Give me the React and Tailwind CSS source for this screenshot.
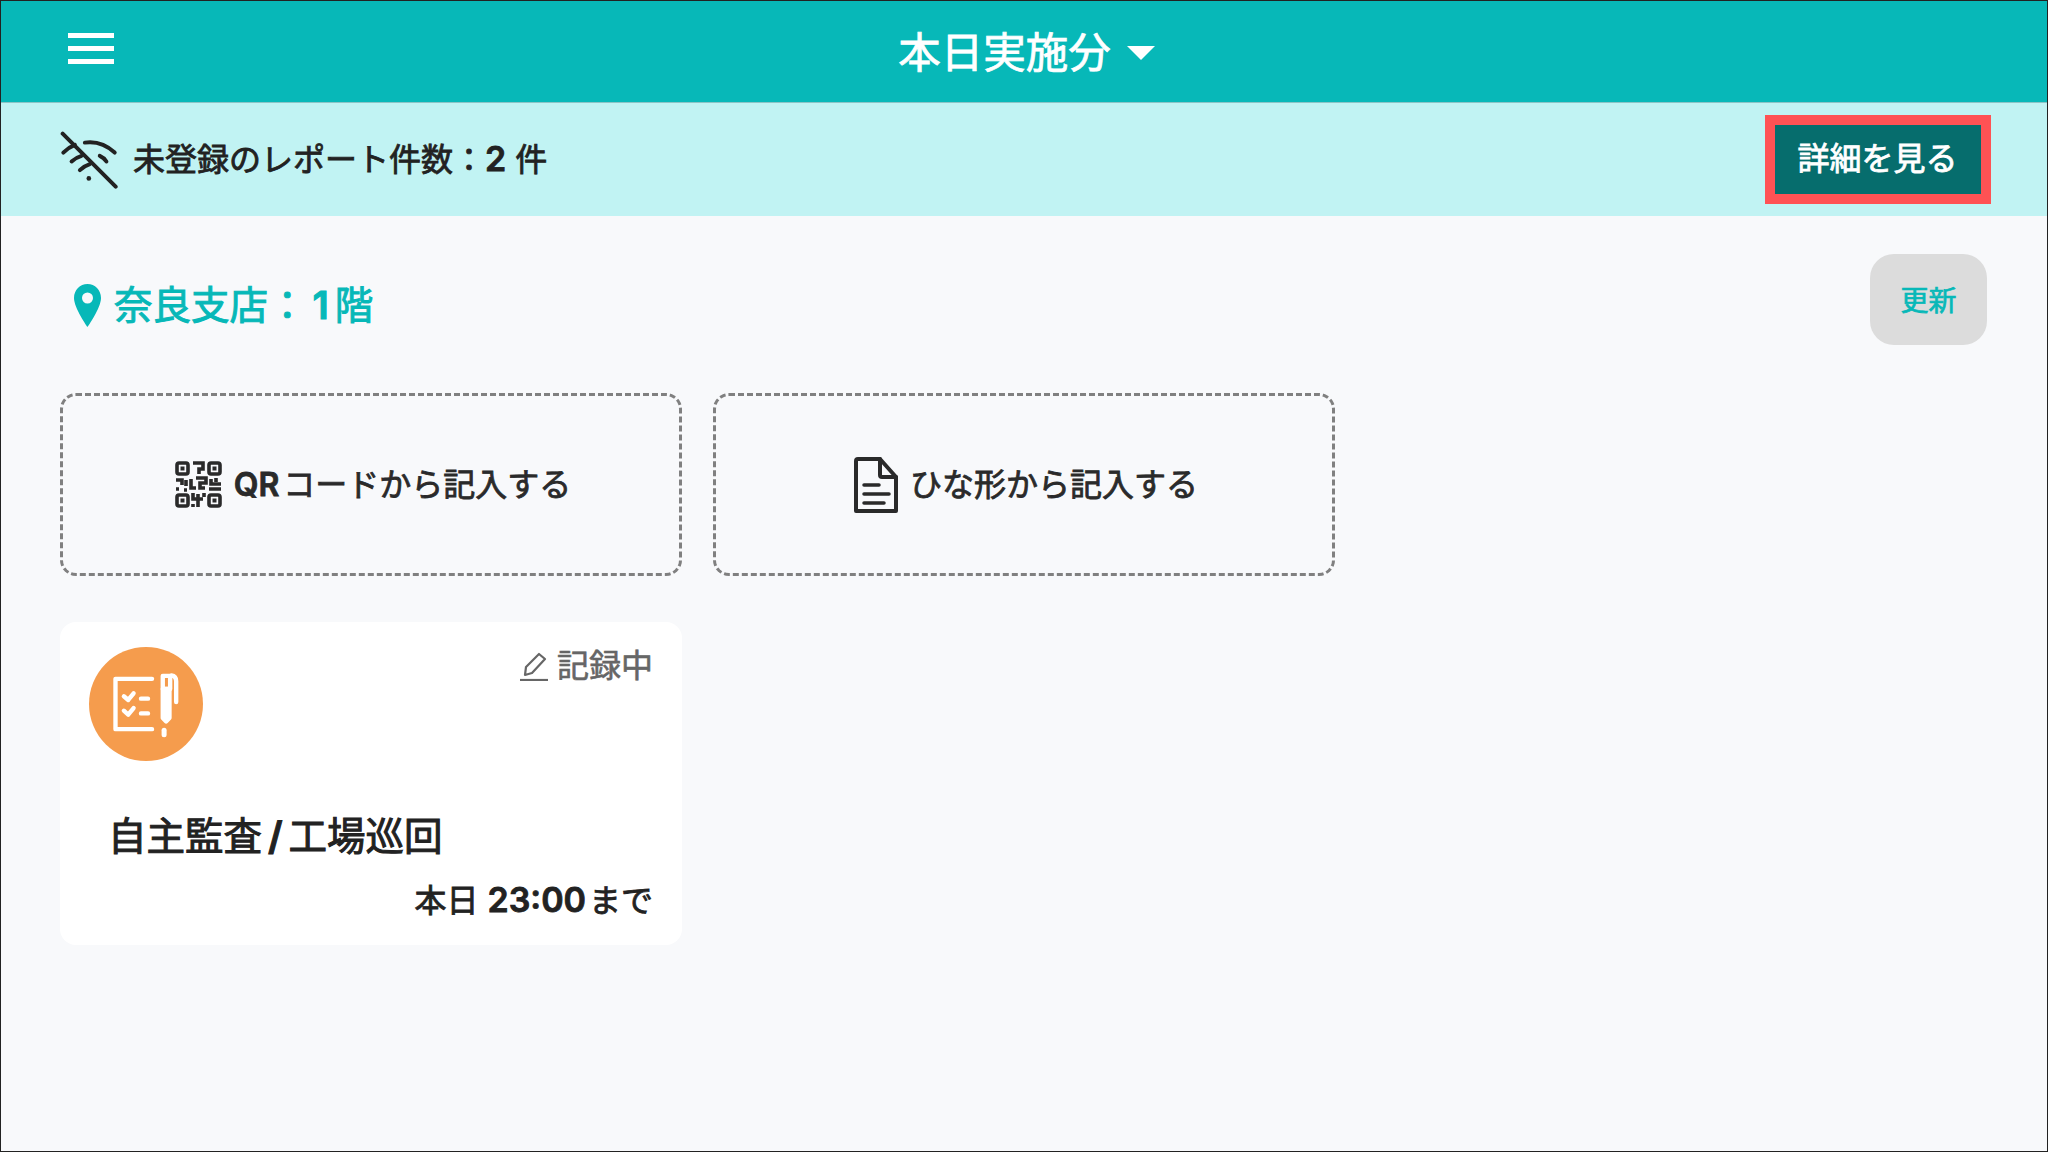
import React from "react";

const font = { fontFamily: 'Inter, "Noto Sans CJK JP", sans-serif' };

const WifiOffIcon = () => (
  <svg viewBox="30 30 175 175" className="w-[58px] h-[58px] shrink-0" fill="none" stroke="#222" strokeWidth="12" strokeLinecap="round">
    <path d="M38 38L198 198" />
    <path d="M40 95Q55 80 75 72" />
    <path d="M105 65Q155 58 195 95" />
    <path d="M65 122Q78 110 95 105" />
    <path d="M150 105Q162 110 170 122" />
    <path d="M90 148Q102 136 120 130" />
    <circle cx="117" cy="173" r="7" fill="#222" stroke="none" />
  </svg>
);

const PinIcon = () => (
  <svg viewBox="0 0 27 43" className="w-[27px] h-[43px] shrink-0">
    <path
      fill="#07b8b8"
      fillRule="evenodd"
      d="M13.5 0C6 0 0 6 0 14C0 24 13.5 43 13.5 43S27 24 27 14C27 6 21 0 13.5 0ZM13.5 8.5A5.5 5.5 0 1 1 13.5 19.5A5.5 5.5 0 1 1 13.5 8.5Z"
    />
  </svg>
);

const QrIcon = () => (
  <svg viewBox="0 0 47 47" className="w-[47px] h-[47px] shrink-0" fill="none" stroke="#2a2a2a" strokeWidth="3.6">
    <rect x="2" y="2" width="11" height="11" rx="2" />
    <rect x="34" y="2" width="11" height="11" rx="2" />
    <rect x="2" y="34" width="11" height="11" rx="2" />
    <rect x="34" y="34" width="11" height="11" rx="2" />
    <rect x="5.5" y="5.5" width="4" height="4" fill="#2a2a2a" stroke="none" />
    <rect x="37.5" y="5.5" width="4" height="4" fill="#2a2a2a" stroke="none" />
    <rect x="5.5" y="37.5" width="4" height="4" fill="#2a2a2a" stroke="none" />
    <rect x="37.5" y="37.5" width="4" height="4" fill="#2a2a2a" stroke="none" />
    <path d="M18 2H28V8H24V13" />
    <path d="M1 19H7V24M11 19V25M16 18V27H21" />
    <path d="M21 17H31V22H25V27H30" />
    <path d="M36 18V23H46M41 17V21M34 28H46" />
    <path d="M1 28H4M9 29H12" />
    <path d="M18 32V38H28M23 33V46M18 43V46M29 32V36" />
  </svg>
);

const DocIcon = () => (
  <svg viewBox="0 0 44 56" className="w-[44px] h-[56px] shrink-0" fill="none" stroke="#2a2a2a" strokeWidth="4" strokeLinejoin="round" strokeLinecap="round">
    <path d="M4 2H26L42 20V54H2V4Q2 2 4 2Z" />
    <path d="M26 2V18Q26 20 28 20H42" />
    <path d="M10 28H25M10 37H35M10 46H30" strokeWidth="3.5" />
  </svg>
);

const PenIcon = () => (
  <svg viewBox="0 0 28 29" className="w-[28px] h-[29px] shrink-0" fill="none" stroke="#666" strokeWidth="2.2" strokeLinejoin="round">
    <path d="M0 28H28" />
    <path d="M5 23L6 15L19 2L25 7L12 21Z" />
  </svg>
);

const ReportIcon = () => (
  <div className="w-[114px] h-[114px] rounded-full bg-[#f59c4d] shrink-0">
    <svg viewBox="58 50 340 340" className="w-full h-full" fill="none" stroke="#fff" strokeWidth="13" strokeLinecap="round" strokeLinejoin="round">
      <path d="M246 145H137V295H246" />
      <path d="M162 197L175 208L191 188M162 240L175 252L191 232" />
      <path d="M213 204H234M213 248H234" />
      <path d="M278 136H300V175H278Z" />
      <path d="M278 175H298V262L288 272L278 262Z" fill="#fff" />
      <path d="M304 135Q318 137 318 152V214" />
      <path d="M282 298V312" strokeWidth="15" />
    </svg>
  </div>
);

const ActionCard = ({ icon, children }) => (
  <button className="h-[183px] pl-[4px] border-[3px] border-dashed border-[#808080] rounded-2xl flex items-center justify-center gap-3 text-[32px] text-[#2a2a2a] [-webkit-text-stroke:0.8px_currentColor]">
    {icon}
    <span>{children}</span>
  </button>
);

export default function App() {
  return (
    <div style={font} className="w-[2048px] h-[1152px] border border-[#222] bg-[#f8f9fb] flex flex-col overflow-hidden">
      <header className="h-[102px] shrink-0 bg-[#07b8b8] border-b border-[#8cc4c6] grid grid-cols-[1fr_auto_1fr] items-center px-[67px]">
        <div className="flex flex-col gap-[8px] w-[46px] mb-[7px]">
          <span className="h-[5px] bg-white" />
          <span className="h-[5px] bg-white" />
          <span className="h-[5px] bg-white" />
        </div>
        <div className="flex items-center gap-4 pt-[3px] pl-[5px] text-white text-[42.5px] [-webkit-text-stroke:0.8px_currentColor]">
          <span>本日実施分</span>
          <span className="w-0 h-0 border-x-[14px] border-x-transparent border-t-[14px] border-t-white" />
        </div>
        <div />
      </header>

      <div className="h-[113px] shrink-0 bg-[#c1f3f3] flex items-center justify-between pl-[59px] pr-[56px]">
        <div className="flex items-center gap-[15px] text-[32px] text-[#222] [-webkit-text-stroke:0.8px_currentColor]">
          <WifiOffIcon />
          <span>
            未登録のレポート件数：<span className="text-[34px] leading-none font-semibold">2</span> 件
          </span>
        </div>
        <button className="w-[226px] h-[89px] pb-[1px] pr-[1px] border-[10px] border-[#ff5254] bg-[#066d6d] text-white text-[32px] [-webkit-text-stroke:0.8px_currentColor]">
          詳細を見る
        </button>
      </div>

      <main className="flex-1 pt-[38px] pl-[59px] pr-[60px]">
        <div className="flex items-start justify-between">
          <div className="flex items-center gap-[13px] pl-[14px] pt-[23px] text-[38.5px] text-[#07b8b8] [-webkit-text-stroke:1px_currentColor]">
            <PinIcon />
            <span>
              奈良支店：<span className="mx-[6px] font-semibold">1</span>階
            </span>
          </div>
          <button className="w-[117px] h-[91px] pt-[2px] rounded-[24px] bg-[#dcdcdc] text-[28px] text-[#07b8b8] [-webkit-text-stroke:0.7px_currentColor]">
            更新
          </button>
        </div>

        <div className="grid grid-cols-[622px_622px] gap-x-[31px] mt-[48px]">
          <ActionCard icon={<QrIcon />}>
            <span className="font-semibold">QR</span>
            <span className="ml-[4px]">コードから記入する</span>
          </ActionCard>
          <ActionCard icon={<DocIcon />}>ひな形から記入する</ActionCard>
        </div>

        <section className="w-[622px] h-[323px] mt-[46px] rounded-2xl bg-white flex flex-col pt-[25px] px-[29px]">
          <div className="flex items-start justify-between">
            <ReportIcon />
            <div className="flex items-center gap-[9px] -mt-[5px] text-[32px] text-[#666] [-webkit-text-stroke:0.6px_currentColor]">
              <PenIcon />
              <span>記録中</span>
            </div>
          </div>
          <h2 className="mt-[47px] pl-[19px] text-[38.5px] text-[#222] [-webkit-text-stroke:1px_currentColor]">
            自主監査<span className="mx-[6px] font-semibold">/</span>工場巡回
          </h2>
          <p className="mt-[11px] text-right text-[32px] text-[#222] [-webkit-text-stroke:0.8px_currentColor]">
            本日<span className="ml-[9px] mr-[3px] text-[34px] leading-none font-semibold">23:00</span>まで
          </p>
        </section>
      </main>
    </div>
  );
}
